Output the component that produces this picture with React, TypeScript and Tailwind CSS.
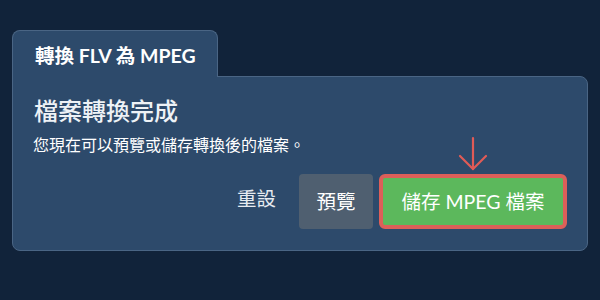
export default function App() {
  return (
    <div
      className="w-[600px] h-[300px] bg-[#11233a] pt-[30px] px-3"
      style={{ fontFamily: "Lato, 'Noto Sans CJK TC', sans-serif" }}
    >
      <div className="relative z-10 -mb-px flex h-[47px] w-[206px] items-center rounded-t-lg border-x border-t border-[#4a6584] bg-[#2d4a6b] pl-[22px] pt-[4px]">
        <span className="text-[19.5px] font-bold text-white">轉換 FLV 為 MPEG</span>
      </div>
      <div className="h-[175px] rounded-b-lg rounded-tr-lg border border-[#4a6584] bg-[#2d4a6b] px-5 pt-[18px]">
        <h2 className="pl-px text-[24px] font-medium leading-[32px] text-[#eef2f6]">檔案轉換完成</h2>
        <p className="mt-[6px] text-[16px] leading-[24px] text-white">您現在可以預覽或儲存轉換後的檔案。</p>
        <div className="mt-[17px] flex items-center justify-end">
          <button className="mb-[5px] mr-[23px] text-[19.5px] text-[#e6ebf0]">重設</button>
          <button className="mr-[6px] h-[55px] w-[74px] rounded bg-[#4f5f70] text-[19.5px] text-white">預覽</button>
          <div className="relative">
            <svg
              className="absolute left-1/2 top-[-38px] -translate-x-1/2"
              width="30"
              height="36"
              viewBox="0 0 30 36"
              fill="none"
              stroke="#e05b57"
              strokeWidth="2.2"
              strokeLinecap="round"
            >
              <path d="M15 2 V33" />
              <path d="M2 20 L15 33 L28 20" />
            </svg>
            <button className="h-[55px] w-[188px] rounded-md border-4 border-[#dc5f59] bg-[#5cb85c] text-[19.5px] text-white">
              儲存 MPEG 檔案
            </button>
          </div>
        </div>
      </div>
    </div>
  );
}
